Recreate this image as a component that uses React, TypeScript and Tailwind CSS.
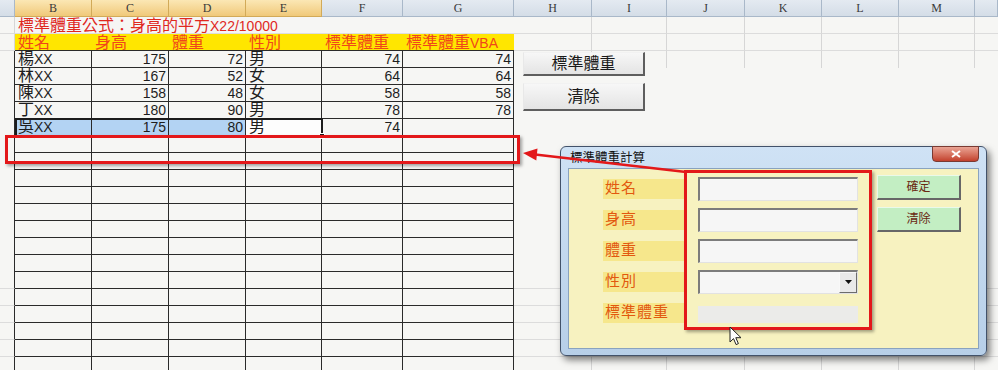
import React from 'react';

const FONT = "font-['Liberation_Sans','Noto_Sans_CJK_TC',sans-serif]";
const CJK = /[\u3000-\u9fff\uff00-\uffef]/;

const Mixed: React.FC<{ text: string }> = ({ text }) => (
  <>
    {text
      .split(/([\u3000-\u9fff\uff00-\uffef]+)/)
      .filter(Boolean)
      .map((part, i) =>
        CJK.test(part) ? (
          <span key={i} className="text-[16px]">{part}</span>
        ) : (
          <span key={i} className="text-[14px]">{part}</span>
        )
      )}
  </>
);

const LETTERS = ['', 'B', 'C', 'D', 'E', 'F', 'G', 'H', 'I', 'J', 'K', 'L', 'M', ''];
const HEADS = ['姓名', '身高', '體重', '性別', '標準體重', '標準體重VBA'];
const DATA = [
  ['楊XX', '175', '72', '男', '74', '74'],
  ['林XX', '167', '52', '女', '64', '64'],
  ['陳XX', '158', '48', '女', '58', '58'],
  ['丁XX', '180', '90', '男', '78', '78'],
  ['吳XX', '175', '80', '男', '74', ''],
];
const RIGHT = [false, true, true, false, true, true];
const ROWS = 21;

function Sheet() {
  const cells: React.ReactNode[] = [];

  // column letters
  LETTERS.forEach((l, c) => {
    const gold = c >= 1 && c <= 4;
    cells.push(
      <div
        key={`h${c}`}
        className={`h-[17px] flex items-center justify-center border-b border-r font-['Liberation_Serif',serif] text-[12px] text-[#3a3a3a] ${
          gold
            ? 'bg-gradient-to-b from-[#fbe7b4] to-[#f0c979] border-[#d2aa58]'
            : 'bg-gradient-to-b from-[#e4eaf1] to-[#d4dde7] border-[#a9b8c9]'
        }`}
      >
        {l}
      </div>
    );
  });

  for (let r = 0; r < ROWS; r++) {
    const table = r >= 2;
    const low = r >= 15;
    // column A strip
    cells.push(
      <div
        key={`a${r}`}
        className={`border-r ${table ? 'border-r-[#2a2a2a]' : 'border-r-[#d6d6d6]'} ${
          r <= 1 || low ? 'border-b border-b-[#dcdcdc]' : ''
        }`}
      />
    );

    if (r === 0) {
      cells.push(
        <div
          key="formula"
          className="col-span-6 border-b border-[#dedede] pl-[3px] leading-[17px] whitespace-nowrap text-[#e0281e]"
        >
          <Mixed text="標準體重公式：身高的平方X22/10000" />
        </div>
      );
    } else if (r === 1) {
      HEADS.forEach((h, i) => {
        cells.push(
          <div
            key={`y${i}`}
            className="bg-[#ffe600] border-b border-[#2a2a2a] pl-[3px] leading-[17px] whitespace-nowrap text-[#f0461a]"
          >
            <Mixed text={h} />
          </div>
        );
      });
    } else {
      const row = DATA[r - 2];
      for (let i = 0; i < 6; i++) {
        const v = row ? row[i] : '';
        const sel = r === 6 && i <= 2;
        const active = r === 6 && i === 3;
        cells.push(
          <div
            key={`t${r}-${i}`}
            className={`border-r border-b border-[#2a2a2a] leading-[16px] whitespace-nowrap text-[#1e1e1e] ${
              RIGHT[i] ? 'text-right pr-[2px]' : 'pl-[3px]'
            } ${sel ? 'bg-[#b3d3f3]' : active ? 'bg-[#fdfdfd]' : ''}`}
          >
            <Mixed text={v} />
          </div>
        );
      }
    }

    // H .. N
    for (let c = 7; c < 14; c++) {
      const grid = r <= 2 || low;
      cells.push(
        <div
          key={`g${r}-${c}`}
          className={`${grid && c < 13 ? 'border-r border-r-[#d6d6d6]' : ''} ${
            r <= 1 || low ? 'border-b border-b-[#dcdcdc]' : ''
          }`}
        />
      );
    }
  }

  return (
    <div className="grid grid-cols-[15px_77px_77px_77px_76px_81px_111px_78px_75px_78px_77px_77px_76px_1fr] auto-rows-[17px]">
      {cells}
    </div>
  );
}

function SheetButton({ label, className }: { label: string; className: string }) {
  return (
    <div
      className={`absolute left-[523px] w-[122px] flex items-center justify-center bg-gradient-to-b from-[#f7f7f7] to-[#e4e4e4] border border-t-[#f2f2f2] border-l-[#e8e8e8] border-r-2 border-b-2 border-r-[#5e5e5e] border-b-[#5e5e5e] text-[16px] text-[#1a1a1a] ${className}`}
    >
      {label}
    </div>
  );
}

function TextBox({ combo }: { combo?: boolean }) {
  return (
    <div className="w-[160px] h-[24px] flex bg-[#f6f6f6] border-t-2 border-l-2 border-t-[#7c7c7c] border-l-[#7c7c7c] border-b border-r border-b-[#e2e2e2] border-r-[#e2e2e2]">
      <div className="flex-1" />
      {combo && (
        <div className="w-[18px] h-full flex items-center justify-center bg-[#e9e9e9] border border-l-[#f8f8f8] border-t-[#f8f8f8] border-r-[#6c6c6c] border-b-[#6c6c6c]">
          <svg width="7" height="4" viewBox="0 0 7 4">
            <path d="M0 0h7L3.5 4z" fill="#111" />
          </svg>
        </div>
      )}
    </div>
  );
}

function DialogButton({ label }: { label: string }) {
  return (
    <div className="w-[84px] h-[25px] flex items-center justify-center bg-[#c3eec3] border border-t-[#eaf9ea] border-l-[#eaf9ea] border-r-2 border-b-2 border-r-[#676767] border-b-[#676767] text-[12px] text-[#6a2812]">
      {label}
    </div>
  );
}

const LABELS = ['姓名', '身高', '體重', '性別', '標準體重'];

function Dialog() {
  return (
    <div className="absolute left-[560px] top-[146px] w-[427px] h-[210px] rounded-[6px] border border-[#42526a] bg-gradient-to-b from-[#cfe2f5] to-[#b7cfe8] shadow-[3px_4px_7px_rgba(0,0,0,0.5)] flex flex-col px-[7px] pb-[6px]">
      <div className="h-[21px] flex justify-between">
        <span className="pt-[3px] pl-[2px] text-[12.5px] leading-[16px] text-[#111]">標準體重計算</span>
        <div className="-mt-[1px] w-[47px] h-[16px] rounded-b-[4px] border border-[#7a3a32] bg-gradient-to-b from-[#e9a394] to-[#c2402c] flex items-center justify-center">
          <svg width="10" height="8" viewBox="0 0 10 8">
            <path d="M1 1l8 6M9 1L1 7" stroke="#fff" strokeWidth="2" />
          </svg>
        </div>
      </div>
      <div className="flex-1 border border-[#8aa3bf] bg-[#f7f2c0] flex">
        <div className="flex flex-col pt-[4px] w-[308px]">
          {LABELS.map((l, i) => (
            <div key={l} className="h-[31px] flex items-center pl-[34px]">
              <div className="w-[83px] h-[20px] bg-[#f6e78c] flex items-center pl-[2px] text-[15px] tracking-[1px] text-[#e2580e]">
                {l}
              </div>
              <div className="ml-[12px]">
                {i < 3 ? (
                  <TextBox />
                ) : i === 3 ? (
                  <TextBox combo />
                ) : (
                  <div className="w-[160px] h-[17px] bg-[#ebebe9] mt-[4px]" />
                )}
              </div>
            </div>
          ))}
        </div>
        <div className="flex flex-col gap-[7px] pt-[6px]">
          <DialogButton label="確定" />
          <DialogButton label="清除" />
        </div>
      </div>
    </div>
  );
}

export default function App() {
  return (
    <div className={`relative w-[998px] h-[370px] overflow-hidden bg-[#f6f6f4] ${FONT}`}>
      <Sheet />

      <SheetButton label="標準體重" className="top-[52px] h-[24px]" />
      <SheetButton label="清除" className="top-[83px] h-[28px]" />

      {/* selection outline */}
      <div className="absolute left-[15px] top-[118px] w-[308px] h-[19px] border-2 border-[#1c1c1c]" />
      <div className="absolute left-[319px] top-[133px] w-[6px] h-[6px] bg-[#1c1c1c] border border-white" />

      {/* red highlight on sheet */}
      <div className="absolute left-[5px] top-[135px] w-[515px] h-[29px] border-[3px] border-[#e3181a] shadow-[2px_2px_3px_rgba(0,0,0,0.35)]" />

      <Dialog />

      {/* red highlight on form */}
      <div className="absolute left-[684px] top-[170px] w-[188px] h-[160px] border-[3px] border-[#e3181a] shadow-[2px_2px_3px_rgba(0,0,0,0.35)]" />

      {/* arrow */}
      <svg className="absolute left-[515px] top-[145px]" width="175" height="32" viewBox="0 0 175 32">
        <line x1="171" y1="27" x2="18" y2="9.2" stroke="#e3181a" strokeWidth="2.5" />
        <path d="M8 8L22.5 3.6L21.3 15.6Z" fill="#e3181a" />
      </svg>

      {/* mouse cursor */}
      <svg className="absolute left-[729px] top-[326px]" width="13" height="20" viewBox="0 0 13 20">
        <path d="M1 1v15l3.5-3.4 2.6 6 2.3-1-2.6-5.9H12z" fill="#fff" stroke="#222" strokeWidth="1" strokeLinejoin="round" />
      </svg>
    </div>
  );
}
